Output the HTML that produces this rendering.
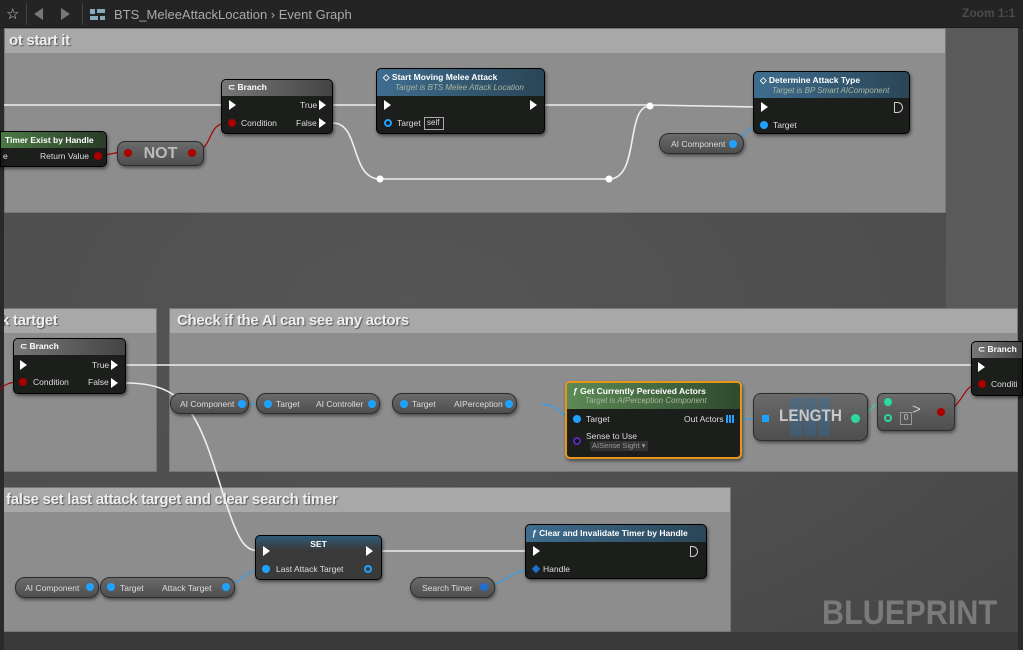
<!DOCTYPE html>
<html><head><meta charset="utf-8"><style>
*{box-sizing:border-box;margin:0;padding:0}
body{width:1023px;height:650px;overflow:hidden;background:#555;font-family:"Liberation Sans",sans-serif;position:relative;color:#ddd}
.a{position:absolute}
.bar{left:0;top:0;width:1023px;height:28px;background:#242424;border-bottom:1px solid #1a1a1a}
.cm{position:absolute;background:#8d8d8d;border:1px solid #777;overflow:hidden}
.cm .h{height:24px;background:#a8a8a8;font-weight:bold;font-size:15px;color:#eee;text-shadow:1px 1px 1px #555;padding:3px 4px;white-space:nowrap;letter-spacing:-0.3px}
.nd{position:absolute;background:rgba(22,24,22,.95);border:1px solid #000;border-radius:5px;box-shadow:1px 2px 3px rgba(0,0,0,.5);font-size:9px;overflow:hidden}
.nh{font-weight:bold;font-size:8.5px;padding:3px 6px;color:#fff;white-space:nowrap}
.sub{font-style:italic;font-weight:normal;color:#a9b6a0;padding-left:12px;font-size:8px}
.pill{position:absolute;height:21px;border-radius:10px;background:linear-gradient(#6a6a6a,#4e4e4e);border:1px solid #2c2c2c;box-shadow:1px 2px 3px rgba(0,0,0,.45);font-size:8.5px;color:#e4e4e4;line-height:19px;white-space:nowrap}
.t{position:absolute;font-size:8.5px;white-space:nowrap;color:#ddd}
.bd{position:absolute;width:8px;height:8px;border-radius:50%;background:#1fa2ff}
.rd{position:absolute;width:8px;height:8px;border-radius:50%;background:#a00}
.ex{position:absolute;width:0;height:0;border-top:5px solid transparent;border-bottom:5px solid transparent;border-left:7px solid #fff}
</style></head><body>
<div class="a" style="left:0;top:28px;width:1023px;height:622px;background:radial-gradient(ellipse at 40% 45%,#555 0%,#4e4e4e 60%,#444 100%)"></div>
<div class="a" style="left:946px;top:28px;width:72px;height:280px;background:#5a5a5a"></div>

<div class="cm" style="left:4px;top:28px;width:942px;height:185px"><div class="h">ot start it</div></div>
<div class="cm" style="left:0;top:308px;width:157px;height:164px"><div class="h" style="padding-left:0">k tartget</div></div>
<div class="cm" style="left:169px;top:308px;width:849px;height:164px"><div class="h" style="padding-left:7px">Check if the AI can see any actors</div></div>
<div class="cm" style="left:0;top:487px;width:731px;height:145px"><div class="h" style="padding-left:5px">false set last attack target and clear search timer</div></div>
<div class="a" style="left:0;top:632px;width:1023px;height:18px;background:#3a3a3a"></div>
<div class="a" style="left:0;top:28px;width:4px;height:622px;background:#2a2a2a"></div>
<div class="a" style="left:1018px;top:28px;width:5px;height:622px;background:#2a2a2a"></div>

<div class="a" style="left:822px;top:594px;font-size:34px;font-weight:bold;color:#7a7a7a;transform:scaleX(0.9);transform-origin:left top">BLUEPRINT</div>

<svg class="a" style="left:0;top:0" width="1023" height="650">
<g fill="none" stroke="#eee" stroke-width="1.6">
<path d="M4 105H224"/><path d="M333 105H380"/><path d="M545 105H650L757 107"/>
<path d="M333 123C360 123 350 179 380 179H609C640 179 625 106 650 106"/>
<path d="M126 365H975"/>
<path d="M126 383C190 383 200 420 225 500C240 545 245 551 262 551"/>
<path d="M382 551H530"/>
</g>
<circle cx="650" cy="106" r="3.5" fill="#fff"/><circle cx="380" cy="179" r="3.5" fill="#fff"/><circle cx="609" cy="179" r="3.5" fill="#fff"/>
<g fill="none" stroke="#a00" stroke-width="1.2">
<path d="M93 156C110 156 110 152 128 152"/><path d="M193 152C215 150 205 123 228 123"/>
<path d="M940 412C965 410 960 384 980 384"/><path d="M0 390C5 384 10 382 20 382"/>
</g>
<g fill="none" stroke="#1fa2ff" stroke-width="1">
<path d="M731 144C745 140 745 125 762 125"/><path d="M250 404H283"/><path d="M396 404H428"/><path d="M541 404C560 404 560 419 577 419"/>
<path d="M730 419H760"/><path d="M227 587C245 580 245 569 265 569"/><path d="M483 587C505 585 510 569 535 569"/>
<path d="M91 587H106"/>
</g>
<path d="M857 418C870 416 870 402 886 402" stroke="#2ed9a0" fill="none"/>
</svg>

<div class="a bar"></div>
<div class="a" style="left:6px;top:5px;font-size:15px;color:#ccc">☆</div>
<div class="a" style="left:26px;top:3px;width:1px;height:22px;background:#444"></div>
<div class="a" style="left:34px;top:8px;width:0;height:0;border-top:6px solid transparent;border-bottom:6px solid transparent;border-right:9px solid #777"></div>
<div class="a" style="left:61px;top:8px;width:0;height:0;border-top:6px solid transparent;border-bottom:6px solid transparent;border-left:9px solid #777"></div>
<div class="a" style="left:82px;top:3px;width:1px;height:22px;background:#444"></div>
<div class="a" style="left:90px;top:9px;width:5px;height:5px;background:#8ab"></div><div class="a" style="left:97px;top:9px;width:8px;height:4px;background:#8ab"></div>
<div class="a" style="left:90px;top:16px;width:8px;height:4px;background:#8ab"></div><div class="a" style="left:100px;top:16px;width:5px;height:4px;background:#8ab"></div>
<div class="a" style="left:114px;top:7px;font-size:13px;color:#aaa">BTS_MeleeAttackLocation › Event Graph</div>
<div class="a" style="left:962px;top:6px;font-size:12px;font-weight:bold;color:#4c4c4c">Zoom 1:1</div>

<div class="nd" style="left:221px;top:79px;width:112px;height:55px"><div class="nh" style="background:linear-gradient(90deg,#777,#444);height:16px;padding-top:2px">⊂ Branch</div></div>
<div class="ex" style="left:229px;top:100px"></div><div class="t" style="left:300px;top:100px">True</div><div class="ex" style="left:319px;top:100px"></div>
<div class="rd" style="left:228px;top:119px"></div><div class="t" style="left:241px;top:118px">Condition</div><div class="t" style="left:296px;top:118px">False</div><div class="ex" style="left:319px;top:118px"></div>

<div class="nd" style="left:0;top:131px;width:107px;height:36px;border-radius:0 5px 5px 0"><div class="nh" style="background:linear-gradient(90deg,#4b7a46,#2a3a28);padding-left:4px">Timer Exist by Handle</div></div>
<div class="t" style="left:3px;top:151px">e</div><div class="t" style="left:40px;top:151px">Return Value</div><div class="rd" style="left:94px;top:152px"></div>
<div class="pill" style="left:117px;top:141px;width:87px;height:25px;border-radius:8px;text-align:center;font-size:16px;font-weight:bold;color:#bbb;line-height:23px">NOT</div>
<div class="rd" style="left:124px;top:149px"></div><div class="rd" style="left:188px;top:149px"></div>

<div class="nd" style="left:376px;top:68px;width:169px;height:66px"><div class="nh" style="background:linear-gradient(90deg,#3f6d8f,#2a4556);height:27px">◇ Start Moving Melee Attack<div class="sub">Target is BTS Melee Attack Location</div></div></div>
<div class="ex" style="left:384px;top:100px"></div><div class="ex" style="left:530px;top:100px"></div>
<div class="a" style="left:384px;top:119px;width:8px;height:8px;border-radius:50%;border:2px solid #1fa2ff"></div><div class="t" style="left:397px;top:118px">Target</div>
<div class="a" style="left:424px;top:117px;width:20px;height:13px;border:1px solid #aaa;font-size:8px;padding-left:2px;color:#ddd">self</div>

<div class="nd" style="left:753px;top:71px;width:157px;height:63px"><div class="nh" style="background:linear-gradient(90deg,#3f6d8f,#2a4556);height:26px">◇ Determine Attack Type<div class="sub">Target is BP Smart AIComponent</div></div></div>
<div class="ex" style="left:761px;top:102px"></div><div class="a" style="left:894px;top:102px;width:9px;height:11px;border:1px solid #ccc;border-radius:0 6px 6px 0"></div>
<div class="bd" style="left:760px;top:121px"></div><div class="t" style="left:773px;top:120px">Target</div>
<div class="pill" style="left:659px;top:133px;width:85px"></div><div class="t" style="left:671px;top:139px">AI Component</div><div class="bd" style="left:729px;top:140px"></div>

<div class="nd" style="left:13px;top:338px;width:113px;height:56px"><div class="nh" style="background:linear-gradient(90deg,#777,#444);height:16px;padding-top:2px">⊂ Branch</div></div>
<div class="ex" style="left:20px;top:360px"></div><div class="t" style="left:92px;top:360px">True</div><div class="ex" style="left:111px;top:360px"></div>
<div class="rd" style="left:19px;top:378px"></div><div class="t" style="left:33px;top:377px">Condition</div><div class="t" style="left:88px;top:377px">False</div><div class="ex" style="left:111px;top:378px"></div>

<div class="pill" style="left:170px;top:393px;width:79px"></div><div class="t" style="left:180px;top:399px">AI Component</div><div class="bd" style="left:238px;top:400px"></div>
<div class="pill" style="left:256px;top:393px;width:124px"></div><div class="bd" style="left:264px;top:400px"></div><div class="t" style="left:276px;top:399px">Target</div><div class="t" style="left:316px;top:399px">AI Controller</div><div class="bd" style="left:368px;top:400px"></div>
<div class="pill" style="left:392px;top:393px;width:125px"></div><div class="bd" style="left:400px;top:400px"></div><div class="t" style="left:412px;top:399px">Target</div><div class="t" style="left:454px;top:399px">AIPerception</div><div class="bd" style="left:505px;top:400px"></div>

<div class="nd" style="left:565px;top:381px;width:177px;height:78px;border:2px solid #e8961a"><div class="nh" style="background:linear-gradient(90deg,#5c8a55,#2f4a2e);height:26px">ƒ Get Currently Perceived Actors<div class="sub">Target is AIPerception Component</div></div></div>
<div class="bd" style="left:573px;top:415px"></div><div class="t" style="left:586px;top:414px">Target</div><div class="t" style="left:684px;top:414px">Out Actors</div>
<div class="a" style="left:726px;top:415px;width:8px;height:8px;background:repeating-linear-gradient(90deg,#1fa2ff 0 2px,transparent 2px 3px)"></div>
<div class="a" style="left:573px;top:437px;width:8px;height:8px;border-radius:50%;background:#111;border:2px solid #5a2ab0"></div><div class="t" style="left:586px;top:431px">Sense to Use</div>
<div class="a" style="left:590px;top:441px;width:58px;height:10px;background:#333;font-size:7.5px;color:#999;padding-left:2px">AISense Sight ▾</div>

<div class="pill" style="left:753px;top:393px;width:115px;height:48px;border-radius:8px"></div>
<div class="a" style="left:790px;top:398px;width:42px;height:38px;background:repeating-linear-gradient(90deg,rgba(40,110,170,.35) 0 12px,transparent 12px 14px)"></div>
<div class="a" style="left:753px;top:406px;width:115px;text-align:center;font-size:17px;font-weight:bold;color:#c8c8c8;transform:scaleX(.9)">LENGTH</div>
<div class="a" style="left:762px;top:415px;width:7px;height:7px;background:#1fa2ff"></div><div class="a" style="left:851px;top:414px;width:9px;height:9px;border-radius:50%;background:#2ed9a0"></div>
<div class="pill" style="left:877px;top:393px;width:78px;height:38px;border-radius:6px"></div>
<div class="a" style="left:884px;top:398px;width:8px;height:8px;border-radius:50%;background:#2ed9a0"></div>
<div class="a" style="left:884px;top:414px;width:8px;height:8px;border-radius:50%;border:2px solid #2ed9a0"></div>
<div class="a" style="left:900px;top:412px;width:12px;height:13px;border:1px solid #999;font-size:8px;text-align:center;color:#ccc">0</div>
<div class="t" style="left:912px;top:401px;font-size:15px;color:#ccc">&gt;</div><div class="rd" style="left:937px;top:408px"></div>

<div class="nd" style="left:971px;top:341px;width:52px;height:55px;border-radius:5px 0 0 5px"><div class="nh" style="background:linear-gradient(90deg,#777,#444);height:16px;padding-top:2px">⊂ Branch</div></div>
<div class="ex" style="left:978px;top:362px"></div><div class="rd" style="left:978px;top:380px"></div><div class="t" style="left:991px;top:379px">Conditi</div>

<div class="nd" style="left:255px;top:535px;width:127px;height:45px;background:linear-gradient(#2c5a78 0,#3a3a3a 14px,#3a3a3a);"><div class="nh" style="text-align:center">SET</div></div>
<div class="ex" style="left:263px;top:546px"></div><div class="ex" style="left:366px;top:546px"></div>
<div class="bd" style="left:262px;top:565px"></div><div class="t" style="left:276px;top:564px">Last Attack Target</div>
<div class="a" style="left:364px;top:565px;width:8px;height:8px;border-radius:50%;border:2px solid #1fa2ff"></div>

<div class="nd" style="left:525px;top:524px;width:182px;height:55px"><div class="nh" style="background:linear-gradient(90deg,#3f6d8f,#2a4556);height:17px;padding-top:3px">ƒ Clear and Invalidate Timer by Handle</div></div>
<div class="ex" style="left:533px;top:546px"></div><div class="a" style="left:690px;top:546px;width:8px;height:11px;border:1px solid #ccc;border-radius:0 6px 6px 0"></div>
<div class="a" style="left:533px;top:566px;width:6px;height:6px;background:#1f6fd0;transform:rotate(45deg)"></div><div class="t" style="left:543px;top:564px">Handle</div>

<div class="pill" style="left:15px;top:577px;width:84px"></div><div class="t" style="left:25px;top:583px">AI Component</div><div class="bd" style="left:86px;top:583px"></div>
<div class="pill" style="left:100px;top:577px;width:135px"></div><div class="bd" style="left:107px;top:583px"></div><div class="t" style="left:120px;top:583px">Target</div><div class="t" style="left:162px;top:583px">Attack Target</div><div class="bd" style="left:222px;top:583px"></div>
<div class="pill" style="left:410px;top:577px;width:85px"></div><div class="t" style="left:422px;top:583px">Search Timer</div><div class="a" style="left:480px;top:583px;width:8px;height:8px;border-radius:50%;background:#1f6fd0"></div>
</body></html>
